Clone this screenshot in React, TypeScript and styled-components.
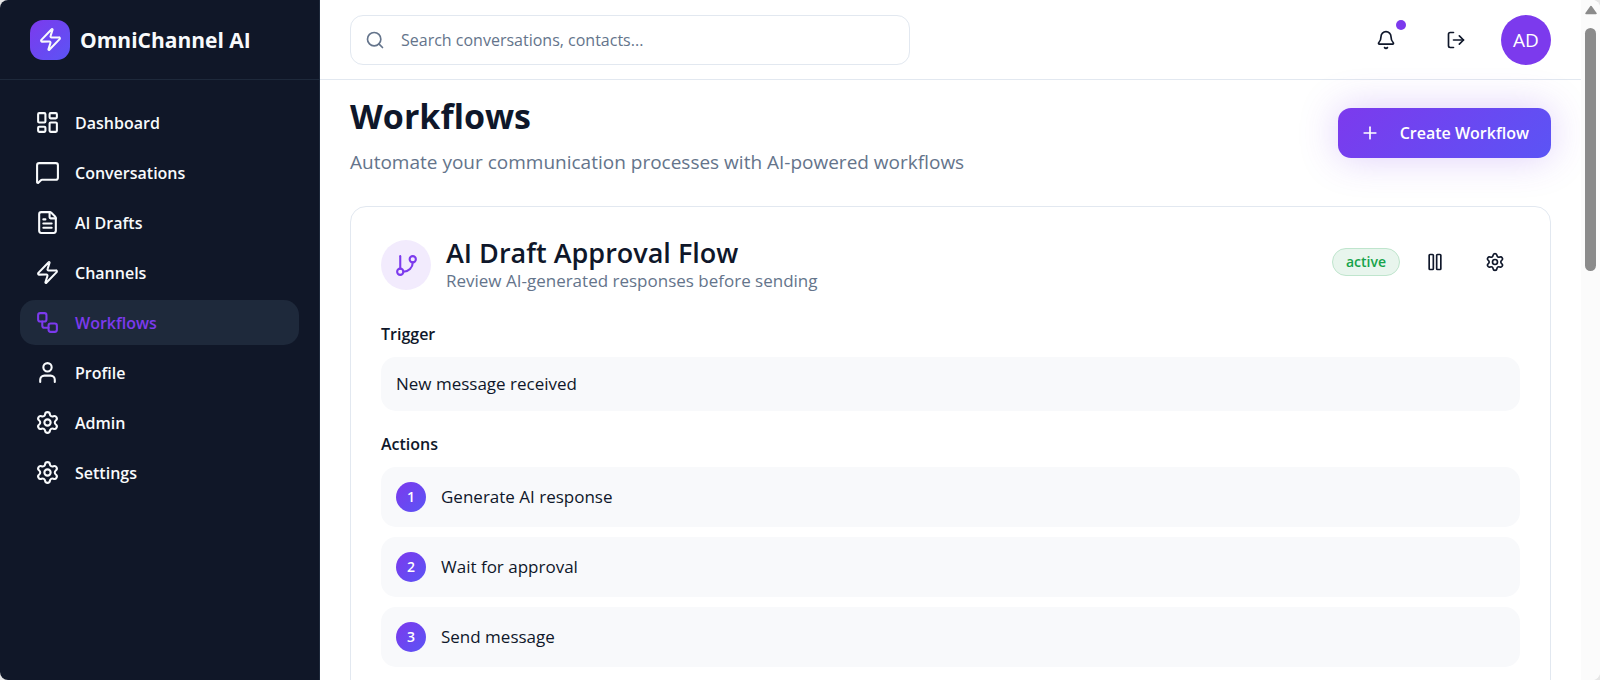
import React from "react";
import styled, { createGlobalStyle } from "styled-components";
import {
  Bell,
  FileText,
  GitBranch,
  LayoutDashboard,
  LogOut,
  MessageSquare,
  Pause,
  Plus,
  Search,
  Settings,
  User,
  Workflow,
  Zap,
  type LucideIcon,
} from "lucide-react";

const color = {
  ink: "#0f172a",
  navy: "#101728",
  navyRaised: "#1e293b",
  muted: "#64748b",
  line: "#e2e8f0",
  soft: "#f8f9fb",
  violet: "#7c3aed",
  gradient: "linear-gradient(135deg, #7c3aed, #5b54f5)",
};

const GlobalStyle = createGlobalStyle`
  *, *::before, *::after { box-sizing: border-box; }
  body {
    margin: 0;
    background: #e6e6e6;
    color: ${color.ink};
    font-family: "Open Sans", "Noto Sans", sans-serif;
    font-size: 16px;
    line-height: 24px;
  }
  h1, h2, h3, p, ul, ol { margin: 0; padding: 0; }
  ul, ol { list-style: none; }
  button, input { font: inherit; color: inherit; }
  button { border: 0; padding: 0; background: none; cursor: pointer; }
`;

const Shell = styled.div`
  display: flex;
  height: 100vh;
  overflow: hidden;
  border-radius: 8px;
  background: #fff;
`;

const Sidebar = styled.aside`
  flex: 0 0 320px;
  background: ${color.navy};
  border-right: 1px solid ${color.navyRaised};
  color: #f8fafc;
`;

const Brand = styled.div`
  display: flex;
  align-items: center;
  gap: 10px;
  height: 80px;
  padding: 0 30px;
  border-bottom: 1px solid ${color.navyRaised};
  font-size: 21px;
  line-height: 28px;
  font-weight: 700;
`;

const BrandMark = styled.span`
  display: grid;
  place-items: center;
  width: 40px;
  height: 40px;
  border-radius: 13px;
  background: ${color.gradient};
`;

const NavList = styled.ul`
  display: grid;
  gap: 5px;
  padding: 20px;
`;

const NavLink = styled.a<{ $active?: boolean }>`
  display: flex;
  align-items: center;
  gap: 15px;
  height: 45px;
  padding: 0 15px;
  border-radius: 15px;
  background: ${(p) => (p.$active ? color.navyRaised : "transparent")};
  color: ${(p) => (p.$active ? color.violet : "inherit")};
  font-weight: 600;
  text-decoration: none;
`;

const Page = styled.div`
  flex: 1;
  min-width: 0;
`;

const TopBar = styled.header`
  display: flex;
  align-items: center;
  justify-content: space-between;
  height: 80px;
  padding: 0 30px;
  border-bottom: 1px solid ${color.line};
`;

const SearchBox = styled.label`
  display: flex;
  align-items: center;
  gap: 16px;
  flex: 0 1 560px;
  height: 50px;
  padding: 0 14px;
  border: 1px solid ${color.line};
  border-radius: 13px;
  color: ${color.muted};
`;

const SearchInput = styled.input`
  flex: 1;
  min-width: 0;
  padding: 0;
  border: 0;
  outline: 0;
  background: none;
  &::placeholder { color: ${color.muted}; opacity: 1; }
`;

const Cluster = styled.div<{ $gap: number }>`
  display: flex;
  align-items: center;
  gap: ${(p) => p.$gap}px;
`;

const IconButton = styled.button`
  position: relative;
  display: grid;
  place-items: center;
  width: 50px;
  height: 50px;
  border-radius: 13px;
`;

const UnreadDot = styled.span`
  position: absolute;
  top: 5px;
  right: 5px;
  width: 10px;
  height: 10px;
  border-radius: 50%;
  background: ${color.violet};
`;

const Avatar = styled.button`
  width: 50px;
  height: 50px;
  border-radius: 50%;
  background: ${color.violet};
  color: #fff;
  font-size: 19px;
`;

const Content = styled.main`
  display: grid;
  gap: 30px;
  padding: 10px 30px 30px;
`;

const PageHead = styled.div`
  display: flex;
  align-items: center;
  justify-content: space-between;
`;

const PageTitle = styled.h1`
  font-size: 34px;
  line-height: 52px;
  font-weight: 700;
`;

const PageLead = styled.p`
  padding-top: 6px;
  color: ${color.muted};
  font-size: 19px;
  line-height: 28px;
`;

const PrimaryButton = styled.button`
  display: flex;
  align-items: center;
  gap: 20px;
  height: 50px;
  padding: 0 22px;
  border-radius: 13px;
  background: ${color.gradient};
  box-shadow: 0 0 38px rgba(124, 58, 237, 0.25);
  color: #fff;
  font-weight: 600;
`;

const Card = styled.article`
  display: grid;
  gap: 20px;
  padding: 30px;
  border: 1px solid ${color.line};
  border-radius: 16px;
`;

const CardHead = styled.div`
  display: flex;
  align-items: flex-start;
  justify-content: space-between;
  padding-bottom: 8px;
`;

const CardBadge = styled.span`
  display: grid;
  place-items: center;
  width: 50px;
  height: 50px;
  border-radius: 50%;
  background: #f2ebfd;
  color: ${color.violet};
`;

const CardTitle = styled.h2`
  font-size: 27px;
  line-height: 32px;
  font-weight: 600;
`;

const CardText = styled.p`
  color: ${color.muted};
  font-size: 17px;
`;

const Status = styled.span`
  padding: 1px 13px;
  border: 1px solid #bfe5cd;
  border-radius: 14px;
  background: #e8f5ed;
  color: #16a34a;
  font-size: 14px;
  font-weight: 600;
`;

const Section = styled.section`
  display: grid;
  gap: 10px;
`;

const SectionTitle = styled.h3`
  font-size: 16px;
  line-height: 26px;
  font-weight: 600;
`;

const Panel = styled.div`
  display: flex;
  align-items: center;
  gap: 15px;
  padding: 15px;
  border-radius: 15px;
  background: ${color.soft};
  font-size: 17px;
`;

const StepList = styled.ol`
  display: grid;
  gap: 10px;
`;

const StepNumber = styled.span`
  display: grid;
  place-items: center;
  width: 30px;
  height: 30px;
  border-radius: 50%;
  background: ${color.gradient};
  color: #fff;
  font-size: 14px;
  font-weight: 600;
`;

const ScrollTrack = styled.div`
  display: flex;
  flex-direction: column;
  align-items: center;
  gap: 13px;
  flex: 0 0 19px;
  padding-top: 5px;
  background: #fbfbfb;
`;

const ScrollThumb = styled.div`
  width: 11px;
  height: 36%;
  border-radius: 6px;
  background: #8b8b8b;
`;

const navItems: { label: string; icon: LucideIcon }[] = [
  { label: "Dashboard", icon: LayoutDashboard },
  { label: "Conversations", icon: MessageSquare },
  { label: "AI Drafts", icon: FileText },
  { label: "Channels", icon: Zap },
  { label: "Workflows", icon: Workflow },
  { label: "Profile", icon: User },
  { label: "Admin", icon: Settings },
  { label: "Settings", icon: Settings },
];

const steps = ["Generate AI response", "Wait for approval", "Send message"];

export default function App() {
  return (
    <>
      <GlobalStyle />
      <Shell>
        <Sidebar>
          <Brand>
            <BrandMark>
              <Zap size={25} />
            </BrandMark>
            OmniChannel AI
          </Brand>
          <nav aria-label="Main">
            <NavList>
              {navItems.map(({ label, icon: Icon }) => (
                <li key={label}>
                  <NavLink href="#" $active={label === "Workflows"}>
                    <Icon size={25} />
                    {label}
                  </NavLink>
                </li>
              ))}
            </NavList>
          </nav>
        </Sidebar>

        <Page>
          <TopBar>
            <SearchBox>
              <Search size={20} />
              <SearchInput
                type="text"
                aria-label="Search"
                placeholder="Search conversations, contacts..."
              />
            </SearchBox>
            <Cluster $gap={20}>
              <IconButton aria-label="Notifications">
                <Bell size={20} />
                <UnreadDot />
              </IconButton>
              <IconButton aria-label="Log out">
                <LogOut size={20} />
              </IconButton>
              <Avatar>AD</Avatar>
            </Cluster>
          </TopBar>

          <Content>
            <PageHead>
              <div>
                <PageTitle>Workflows</PageTitle>
                <PageLead>
                  Automate your communication processes with AI-powered workflows
                </PageLead>
              </div>
              <PrimaryButton>
                <Plus size={20} />
                Create Workflow
              </PrimaryButton>
            </PageHead>

            <Card>
              <CardHead>
                <Cluster $gap={15}>
                  <CardBadge>
                    <GitBranch size={25} />
                  </CardBadge>
                  <div>
                    <CardTitle>AI Draft Approval Flow</CardTitle>
                    <CardText>Review AI-generated responses before sending</CardText>
                  </div>
                </Cluster>
                <Cluster $gap={10}>
                  <Status>active</Status>
                  <IconButton aria-label="Pause workflow">
                    <Pause size={20} />
                  </IconButton>
                  <IconButton aria-label="Workflow settings">
                    <Settings size={20} />
                  </IconButton>
                </Cluster>
              </CardHead>

              <Section>
                <SectionTitle>Trigger</SectionTitle>
                <Panel>New message received</Panel>
              </Section>

              <Section>
                <SectionTitle>Actions</SectionTitle>
                <StepList>
                  {steps.map((step, index) => (
                    <li key={step}>
                      <Panel>
                        <StepNumber>{index + 1}</StepNumber>
                        {step}
                      </Panel>
                    </li>
                  ))}
                </StepList>
              </Section>
            </Card>
          </Content>
        </Page>

        <ScrollTrack aria-hidden="true">
          <svg width="12" height="10" viewBox="0 0 12 10">
            <path
              d="M6 1.5 11 8.5H1Z"
              fill="#8b8b8b"
              stroke="#8b8b8b"
              strokeWidth="1.5"
              strokeLinejoin="round"
            />
          </svg>
          <ScrollThumb />
        </ScrollTrack>
      </Shell>
    </>
  );
}
